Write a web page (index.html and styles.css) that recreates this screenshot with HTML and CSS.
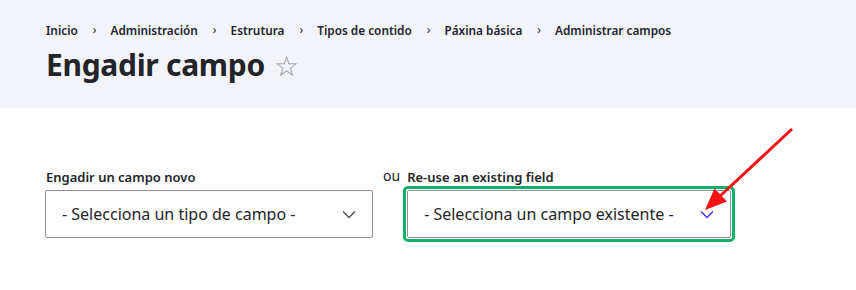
FILE: index.html
```html
<!DOCTYPE html>
<html lang="gl">
<head>
<meta charset="utf-8">
<title>Engadir campo</title>
<link rel="stylesheet" href="styles.css">
</head>
<body>
<header class="page-header">
  <nav class="breadcrumb">
    <a class="crumb">Inicio</a><span class="sep">›</span>
    <a class="crumb">Administración</a><span class="sep">›</span>
    <a class="crumb">Estrutura</a><span class="sep">›</span>
    <a class="crumb">Tipos de contido</a><span class="sep">›</span>
    <a class="crumb">Páxina básica</a><span class="sep">›</span>
    <a class="crumb">Administrar campos</a>
  </nav>
  <h1 class="title">Engadir campo <span class="star">☆</span></h1>
</header>
<main class="content">
  <div class="fields">
    <div class="field field-new">
      <label class="label">Engadir un campo novo</label>
      <div class="select">
        <span class="select-text">- Selecciona un tipo de campo -</span>
        <svg class="chev" width="14" height="9" viewBox="0 0 14 9"><path d="M1 1.5 L7 7.5 L13 1.5" fill="none" stroke="#545560" stroke-width="1.5"/></svg>
      </div>
    </div>
    <div class="or">ou</div>
    <div class="field field-existing">
      <label class="label">Re-use an existing field</label>
      <div class="highlight">
        <div class="select">
          <span class="select-text">- Selecciona un campo existente -</span>
          <svg class="chev" width="14" height="9" viewBox="0 0 14 9"><path d="M1 1.5 L7 7.5 L13 1.5" fill="none" stroke="#4b2fd6" stroke-width="1.5"/></svg>
        </div>
      </div>
    </div>
  </div>
  <svg class="arrow" width="120" height="110" viewBox="0 0 120 110">
    <line x1="102" y1="9" x2="29" y2="77" stroke="#f21414" stroke-width="3"/>
    <polygon points="15,90 37,81.5 24.5,68.5" fill="#f21414"/>
  </svg>
</main>
</body>
</html>
```
FILE: styles.css
```css
html, body {
  margin: 0;
  padding: 0;
  background: #ffffff;
  font-family: "Noto Sans", "Open Sans", sans-serif;
  color: #232429;
}
.page-header {
  background: #f3f4f9;
  height: 108px;
  box-sizing: border-box;
  padding: 20px 46px 0;
}
.breadcrumb {
  display: flex;
  align-items: center;
  font-size: 11.8px;
  font-weight: 600;
  line-height: 20px;
  color: #222330;
}
.crumb {
  color: #222330;
}
.sep {
  margin: 0 14px 0 15px;
  font-weight: 400;
  font-size: 12px;
}
.title {
  margin: 6px 0 0;
  font-size: 30px;
  line-height: 38px;
  font-weight: 700;
  letter-spacing: -0.3px;
  color: #232429;
}
.star {
  font-weight: 400;
  color: #8e929c;
  font-size: 28px;
  margin-left: 2px;
}
.content {
  position: relative;
  padding: 60px 46px 0 45px;
}
.fields {
  display: flex;
  align-items: flex-start;
}
.field {
  display: flex;
  flex-direction: column;
}
.label {
  font-size: 13px;
  font-weight: 600;
  line-height: 18px;
  margin-bottom: 4px;
  color: #232429;
  padding-left: 1px;
}
.field-existing .label {
  margin-bottom: 0;
  padding-left: 4px;
}
.select {
  box-sizing: border-box;
  height: 48px;
  border: 1px solid #919297;
  border-radius: 2px;
  background: #fff;
  display: flex;
  align-items: center;
  justify-content: space-between;
  font-size: 16px;
}
.field-new .select {
  width: 328px;
  padding: 0 16px 0 16px;
}
.or {
  font-size: 14px;
  line-height: 18px;
  margin: -1px 3px 0 10px;
  color: #232429;
}
.highlight {
  border: 3px solid #12b06b;
  border-radius: 5px;
  padding: 1px;
}
.field-existing .select {
  width: 324px;
  padding: 0 16px 0 15px;
}
.field-existing .select-text {
  padding-left: 1px;
}
.chev {
  display: block;
}
.arrow {
  position: absolute;
  left: 690px;
  top: 12px;
}
```
